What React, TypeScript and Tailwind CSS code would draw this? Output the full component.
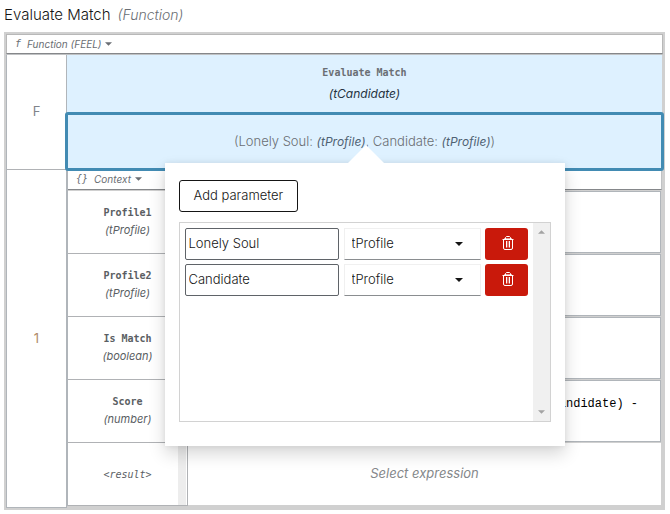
import { useState } from "react";
import type { ReactNode } from "react";

type Entry = { name: string; type: string };

const entries: Entry[] = [
  { name: "Profile1", type: "(tProfile)" },
  { name: "Profile2", type: "(tProfile)" },
  { name: "Is Match", type: "(boolean)" },
  { name: "Score", type: "(number)" },
];

function Caret({ className }: { className: string }) {
  return (
    <svg viewBox="0 0 8 4" className={className} aria-hidden="true">
      <path d="M0 0h8L4 4z" fill="currentColor" />
    </svg>
  );
}

function TrashIcon() {
  return (
    <svg viewBox="0 0 12 14" className="mb-[2px] h-[14px] w-3" fill="none" stroke="currentColor" aria-hidden="true">
      <path d="M0.5 3.5h11M3.5 3v-1.5l1-1h3l1 1V3M1.5 4v8q0 1.5 1.5 1.5h6q1.5 0 1.5-1.5V4M4.5 5v6.5M7.5 5v6.5" />
      <path d="M2 2.5h8M6 5v6.5" strokeOpacity="0.6" />
    </svg>
  );
}

function LogicHeader({ symbol, children }: { symbol: string; children: ReactNode }) {
  return (
    <button type="button" className="flex items-center text-[10px] leading-4 italic text-[#6a6e73]">
      <span className="mr-[6px] font-['DejaVu_Sans_Mono',monospace]">{symbol}</span>
      <span className="mr-1">{children}</span>
      <Caret className="h-1 w-[7px]" />
    </button>
  );
}

function NameCell({ name, type }: Entry) {
  return (
    <div className="flex w-[119px] shrink-0 flex-col items-center border-b border-[#b0b2b5] bg-white pt-[13px] text-[#5a5e63]">
      <span className="font-['DejaVu_Sans_Mono',monospace] text-[10px] leading-[18px] font-bold">{name}</span>
      <span className="text-[11px] leading-4 italic">{type}</span>
    </div>
  );
}

function ParameterRow({ initial }: { initial: string }) {
  const [name, setName] = useState(initial);
  return (
    <div className="flex h-8 items-stretch">
      <input
        aria-label="Parameter name"
        value={name}
        onChange={(e) => setName(e.target.value)}
        className="w-[154px] rounded-xs border border-[#5f6368] px-[3px] text-[13px] font-light text-[#151515]"
      />
      <div className="relative ml-[5px] w-[137px]">
        <select
          aria-label="Parameter type"
          defaultValue="tProfile"
          className="h-full w-full appearance-none border border-[#f0f0f0] border-b-[#8a8d90] px-[7px] text-[13px] font-light text-[#151515]"
        >
          <option>tProfile</option>
          <option>tCandidate</option>
        </select>
        <Caret className="pointer-events-none absolute top-[14px] right-[18px] h-1 w-2 text-[#151515]" />
      </div>
      <button
        type="button"
        aria-label="Delete parameter"
        className="ml-1 flex w-[43px] items-center justify-center rounded-[3px] bg-[#c9190b] pl-[3px] text-white"
      >
        <TrashIcon />
      </button>
    </div>
  );
}

function ParametersPopover() {
  return (
    <div
      role="dialog"
      aria-label="Parameters"
      className="absolute top-[49px] left-1/2 w-[400px] -translate-x-1/2 bg-white px-[14px] pt-[17px] pb-6 shadow-[0_8px_16px_rgba(3,3,3,0.16),0_0_6px_rgba(3,3,3,0.08)]"
    >
      <svg viewBox="0 0 36 18" className="absolute -top-[18px] left-[183px] h-[18px] w-9 text-white" aria-hidden="true">
        <path d="M0 18 18 0l18 18z" fill="currentColor" />
      </svg>
      <button type="button" className="h-8 rounded-[3px] border border-[#151515] px-[14px] text-[13px] font-light text-[#151515]">
        Add parameter
      </button>
      <div className="mt-[10px] flex h-[200px] border border-[#d2d2d2]">
        <div className="flex flex-1 flex-col gap-1 px-[5px] pt-[5px]">
          <ParameterRow initial="Lonely Soul" />
          <ParameterRow initial="Candidate" />
        </div>
        <div className="flex w-[17px] flex-col items-center justify-between bg-[#f0f0f0] py-[7px] text-[#a3a3a3]">
          <Caret className="h-1 w-[7px] rotate-180" />
          <Caret className="h-1 w-[7px]" />
        </div>
      </div>
    </div>
  );
}

export default function App() {
  return (
    <main className="bg-white pt-1 pr-[5px] pb-1 pl-1 font-['Inter',sans-serif]">
      <h1 className="flex h-7 items-start text-[15px] leading-[22px] font-light text-[#151515]">
        <span>Evaluate Match</span>
        <span className="ml-[7px] text-sm leading-[22px] italic text-[#6a6e73]">(Function)</span>
      </h1>

      <section className="bg-[#d0d0d0] p-[2px]">
        <header className="flex h-5 items-center border border-[#b8b8b8] border-b-[#85878a] bg-white px-2">
          <LogicHeader symbol="f">Function (FEEL)</LogicHeader>
        </header>

        <div className="flex border-t border-[#c0c2c4]">
          <div className="flex w-[61px] shrink-0 flex-col border-x border-b border-[#b0b5ba] bg-white text-[13px]">
            <div className="flex h-[115px] items-center justify-center border-b border-[#b0b2b5] text-[#80848a]">F</div>
            <div className="flex flex-1 items-center justify-center text-[#b08a6a]">1</div>
          </div>

          <div className="mr-px mb-[2px] min-w-0 flex-1">
            <div className="flex h-[59px] flex-col items-center bg-[#def1ff] pt-[7px]">
              <span className="font-['DejaVu_Sans_Mono',monospace] text-[10px] leading-[22px] font-bold text-[#6a6e73]">
                Evaluate Match
              </span>
              <span className="text-xs leading-5 italic text-[#26333f]">(tCandidate)</span>
            </div>

            <div className="relative z-10 flex h-[55px] items-center justify-center rounded-[1px] bg-[#def1ff] text-[13px] font-light text-[#6a6e73] outline-3 -outline-offset-1 outline-[#428bb3]">
              <p>
                (Lonely Soul: <i className="text-xs font-normal text-[#4f6273]">(tProfile)</i>, Candidate:{" "}
                <i className="text-xs font-normal text-[#4f6273]">(tProfile)</i>)
              </p>
              <ParametersPopover />
            </div>

            <div className="border-l border-[#b0b5ba]">
              <header className="flex h-[21px] items-center border-r border-b border-r-[#c0c2c4] border-b-[#85878a] bg-white px-2">
                <LogicHeader symbol="{}">Context</LogicHeader>
              </header>
              <div className="mt-px mr-px">
                {entries.map((entry) => (
                  <div key={entry.name} className="flex h-[63px]">
                    <NameCell {...entry} />
                    <div className="mb-px flex min-w-0 flex-1 border border-[#b0b5ba] bg-white">
                      {entry.name === "Score" && (
                        <code className="flex-1 pt-[15px] pr-[22px] text-right font-['Liberation_Mono',monospace] text-xs leading-4 text-black">
                          Candidate) -
                        </code>
                      )}
                    </div>
                  </div>
                ))}
                <div className="flex h-[63px]">
                  <div className="relative flex w-[120px] shrink-0 items-center justify-center border-r border-b border-[#b0b2b5] bg-white font-['DejaVu_Sans_Mono',monospace] text-[10px] italic text-[#5a5e63]">
                    &lt;result&gt;
                    <span className="absolute inset-y-0 right-px w-2 bg-[#ededed]" />
                  </div>
                  <div className="mb-px flex min-w-0 flex-1 items-center justify-center bg-white text-[13px] italic text-[#85888b]">
                    Select expression
                  </div>
                </div>
              </div>
            </div>
          </div>
        </div>
      </section>
    </main>
  );
}
